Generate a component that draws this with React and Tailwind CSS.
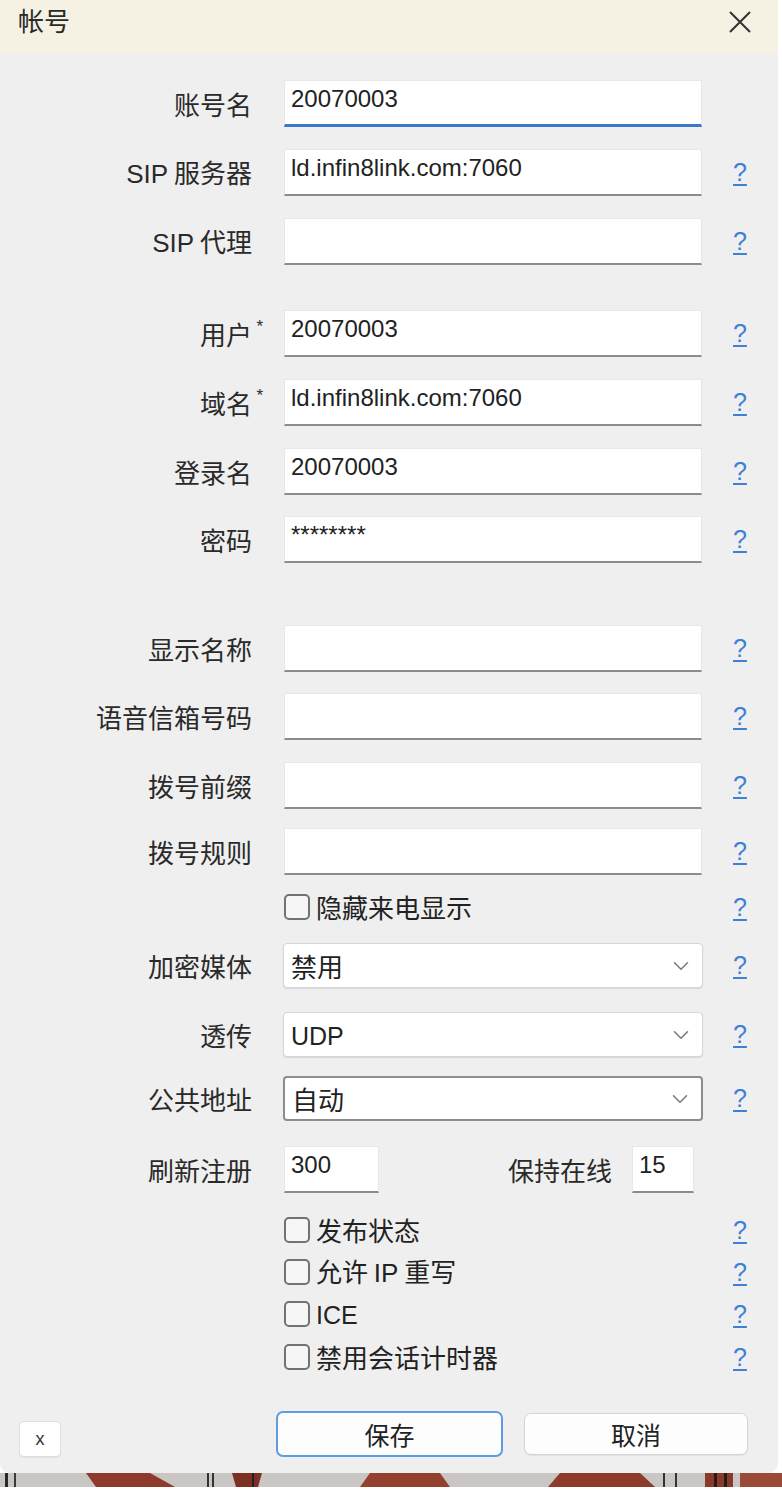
import React from 'react';
import { ChevronDown } from 'lucide-react';

const cjk = "font-['Noto_Sans_CJK_SC','Noto_Sans',sans-serif]";
const lat = "font-['Liberation_Sans','Noto_Sans_CJK_SC',sans-serif]";

function Help() {
  return (
    <span className="ml-[31px] w-[16px] text-[25px] leading-none text-[#3d80d6] underline decoration-2 underline-offset-[3px] font-['Liberation_Sans',sans-serif]">
      ?
    </span>
  );
}

function Label({ children, star }) {
  return (
    <div className="w-[252px] shrink-0 text-right text-[26px] leading-[30px] text-[#2a2a2a]">
      <span className="relative">
        {children}
        {star && (
          <span className="absolute -right-[11px] top-[3px] text-[17px] leading-none font-['Liberation_Sans',sans-serif]">*</span>
        )}
      </span>
    </div>
  );
}

function Input({ value, focus, w }) {
  return (
    <div
      className={`${w || 'w-[418px]'} h-[47px] shrink-0 bg-white border border-[#e7e7e7] ${
        focus ? 'border-b-[3px] border-b-[#3d78c8]' : 'border-b-2 border-b-[#8c8c8c]'
      } pl-[6px] pt-[3px] text-[24px] leading-[30px] text-[#222] ${lat}`}
    >
      {value}
    </div>
  );
}

function Select({ value, strong }) {
  return (
    <div
      className={`w-[420px] h-[45px] shrink-0 bg-white rounded-[4px] flex items-center justify-between pl-[7px] pr-[8px] ${
        strong ? 'border-2 border-[#8d8d8d]' : 'border border-[#d6d6d6] shadow-[0_1px_1px_rgba(0,0,0,0.10)]'
      }`}
    >
      <span className="text-[26px] leading-[30px] text-[#222]">{value}</span>
      <ChevronDown size={26} strokeWidth={1.4} color="#7a7a7a" />
    </div>
  );
}

function Check({ label }) {
  return (
    <div className="flex items-center w-[418px] h-[28px] shrink-0">
      <span className="w-[26px] h-[26px] rounded-[5px] border-2 border-[#727272] bg-[#f6f6f6] shrink-0" />
      <span className="ml-[6px] text-[26px] leading-[28px] text-[#222]">{label}</span>
    </div>
  );
}

function Row({ mt, h, children }) {
  return <div className={`flex items-center ${h || ''} ${mt}`}>{children}</div>;
}

function Wallpaper() {
  return (
    <svg width="782" height="14" viewBox="0 0 782 14" className="block">
      <rect x="0" y="0" width="782" height="14" fill="#c9c6c3" />
      <rect x="5" y="0" width="3" height="14" fill="#2a2a2a" />
      <rect x="14" y="0" width="2" height="14" fill="#3a3a3a" />
      <polygon points="86,0 150,0 175,14 96,14" fill="#8e3b2e" />
      <rect x="207" y="0" width="2" height="14" fill="#333" />
      <rect x="212" y="0" width="2" height="14" fill="#333" />
      <polygon points="232,0 262,0 258,14 236,14" fill="#7e2f24" />
      <rect x="252" y="0" width="2" height="14" fill="#222" />
      <polygon points="370,0 440,0 450,14 360,14" fill="#93402f" />
      <polygon points="560,0 640,0 655,14 548,14" fill="#8f3b2c" />
      <rect x="663" y="0" width="2" height="14" fill="#333" />
      <rect x="675" y="0" width="2" height="14" fill="#333" />
      <rect x="705" y="0" width="28" height="14" fill="#8a3a2a" />
      <rect x="714" y="0" width="3" height="14" fill="#2a1a14" />
      <rect x="724" y="0" width="3" height="14" fill="#2a1a14" />
      <rect x="740" y="0" width="42" height="14" fill="#9a4a36" />
    </svg>
  );
}

export default function App() {
  return (
    <div className={`w-[782px] h-[1502px] bg-white ${cjk}`}>
      <div className="w-[778px] h-[1473px] bg-[#efefef] rounded-b-[10px] overflow-hidden flex flex-col">
        {/* title bar */}
        <div className="h-[54px] shrink-0 bg-[#f6f2e3] flex items-start justify-between pl-[18px] pr-[26px] pt-[4px]">
          <span className="text-[26px] leading-[32px] text-[#2a2a2a]">帐号</span>
          <svg width="24" height="24" viewBox="0 0 24 24" className="mt-[6px]">
            <path d="M2 2 L22 22 M22 2 L2 22" stroke="#333" strokeWidth="2" fill="none" />
          </svg>
        </div>

        {/* body */}
        <div className="flex flex-col">
          <Row mt="mt-[26px]">
            <Label>账号名</Label>
            <div className="ml-[32px]"><Input value="20070003" focus /></div>
          </Row>
          <Row mt="mt-[22px]">
            <Label><span className="font-['Liberation_Sans',sans-serif]">SIP</span> 服务器</Label>
            <div className="ml-[32px]"><Input value="ld.infin8link.com:7060" /></div>
            <Help />
          </Row>
          <Row mt="mt-[22px]">
            <Label><span className="font-['Liberation_Sans',sans-serif]">SIP</span> 代理</Label>
            <div className="ml-[32px]"><Input value="" /></div>
            <Help />
          </Row>

          <Row mt="mt-[45px]">
            <Label star>用户</Label>
            <div className="ml-[32px]"><Input value="20070003" /></div>
            <Help />
          </Row>
          <Row mt="mt-[22px]">
            <Label star>域名</Label>
            <div className="ml-[32px]"><Input value="ld.infin8link.com:7060" /></div>
            <Help />
          </Row>
          <Row mt="mt-[22px]">
            <Label>登录名</Label>
            <div className="ml-[32px]"><Input value="20070003" /></div>
            <Help />
          </Row>
          <Row mt="mt-[21px]">
            <Label>密码</Label>
            <div className="ml-[32px]"><Input value="********" /></div>
            <Help />
          </Row>

          <Row mt="mt-[62px]">
            <Label>显示名称</Label>
            <div className="ml-[32px]"><Input value="" /></div>
            <Help />
          </Row>
          <Row mt="mt-[21px]">
            <Label>语音信箱号码</Label>
            <div className="ml-[32px]"><Input value="" /></div>
            <Help />
          </Row>
          <Row mt="mt-[22px]">
            <Label>拨号前缀</Label>
            <div className="ml-[32px]"><Input value="" /></div>
            <Help />
          </Row>
          <Row mt="mt-[19px]">
            <Label>拨号规则</Label>
            <div className="ml-[32px]"><Input value="" /></div>
            <Help />
          </Row>

          <Row mt="mt-[18px]" h="h-[28px]">
            <div className="w-[252px] shrink-0" />
            <div className="ml-[32px]"><Check label="隐藏来电显示" /></div>
            <Help />
          </Row>

          <Row mt="mt-[22px]">
            <Label>加密媒体</Label>
            <div className="ml-[31px]"><Select value="禁用" /></div>
            <div className="-ml-[1px]"><Help /></div>
          </Row>
          <Row mt="mt-[24px]">
            <Label>透传</Label>
            <div className="ml-[31px]"><Select value={<span className="font-['Liberation_Sans',sans-serif] text-[25px]">UDP</span>} /></div>
            <div className="-ml-[1px]"><Help /></div>
          </Row>
          <Row mt="mt-[19px]">
            <Label>公共地址</Label>
            <div className="ml-[31px]"><Select value="自动" strong /></div>
            <div className="-ml-[1px]"><Help /></div>
          </Row>

          <Row mt="mt-[25px]">
            <Label>刷新注册</Label>
            <div className="ml-[32px]"><Input value="300" w="w-[95px]" /></div>
            <span className="ml-[129px] text-[26px] leading-[30px] text-[#2a2a2a]">保持在线</span>
            <div className="ml-[20px]"><Input value="15" w="w-[62px]" /></div>
          </Row>

          <Row mt="mt-[23px]" h="h-[28px]">
            <div className="w-[252px] shrink-0" />
            <div className="ml-[32px]"><Check label="发布状态" /></div>
            <Help />
          </Row>
          <Row mt="mt-[14px]" h="h-[28px]">
            <div className="w-[252px] shrink-0" />
            <div className="ml-[32px]"><Check label={<>允许 <span className="font-['Liberation_Sans',sans-serif]">IP</span> 重写</>} /></div>
            <Help />
          </Row>
          <Row mt="mt-[14px]" h="h-[28px]">
            <div className="w-[252px] shrink-0" />
            <div className="ml-[32px]"><Check label={<span className="font-['Liberation_Sans',sans-serif] text-[25px]">ICE</span>} /></div>
            <Help />
          </Row>
          <Row mt="mt-[15px]" h="h-[28px]">
            <div className="w-[252px] shrink-0" />
            <div className="ml-[32px]"><Check label="禁用会话计时器" /></div>
            <Help />
          </Row>

          {/* buttons */}
          <div className="flex items-center mt-[40px]">
            <button className="ml-[19px] mt-[10px] w-[42px] h-[36px] bg-white border border-[#dedede] rounded-[5px] text-[18px] leading-none text-[#333] font-['Liberation_Sans',sans-serif] shadow-[0_1px_1px_rgba(0,0,0,0.06)]">
              x
            </button>
            <button className="ml-[215px] w-[227px] h-[46px] bg-[#fdfdfd] border-2 border-[#5f9de2] rounded-[7px] text-[25px] leading-none text-[#222]">
              保存
            </button>
            <button className="ml-[21px] w-[224px] h-[42px] bg-[#fdfdfd] border border-[#d4d4d4] rounded-[7px] text-[25px] leading-none text-[#222] shadow-[0_1px_1px_rgba(0,0,0,0.06)]">
              取消
            </button>
          </div>
        </div>
      </div>
      <Wallpaper />
    </div>
  );
}
